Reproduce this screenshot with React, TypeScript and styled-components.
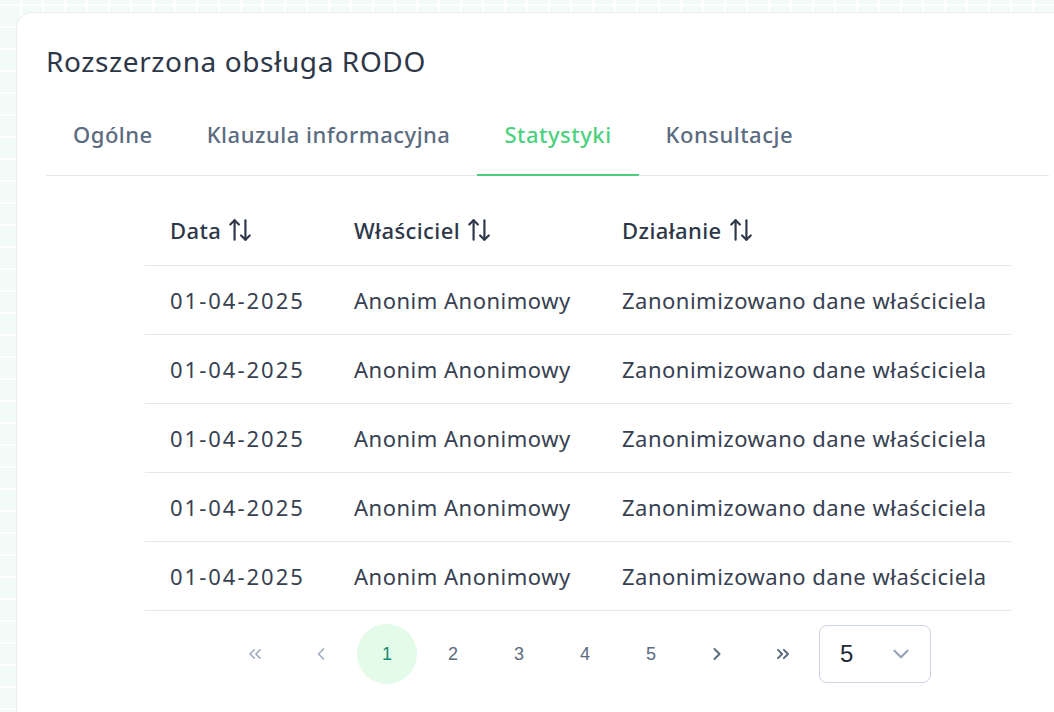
import React from "react";
import styled, { createGlobalStyle } from "styled-components";
import {
  ChevronDown,
  ChevronLeft,
  ChevronRight,
  ChevronsLeft,
  ChevronsRight,
} from "lucide-react";

const FONT = `"Noto Sans", "Open Sans", sans-serif`;

const GlobalStyle = createGlobalStyle`
  html, body {
    margin: 0;
    padding: 0;
    overflow: hidden;
  }
  body {
    font-family: ${FONT};
    background-color: #f2fbf8;
    background-image:
      repeating-linear-gradient(90deg, transparent 0 20px, #ffffff 20px 22px),
      repeating-linear-gradient(0deg, transparent 0 20px, #ffffff 20px 22px);
  }
`;

const tabs = ["Ogólne", "Klauzula informacyjna", "Statystyki", "Konsultacje"];

const columns = ["Data", "Właściciel", "Działanie"];

const rows = Array.from({ length: 5 }, () => ({
  date: "01-04-2025",
  owner: "Anonim Anonimowy",
  action: "Zanonimizowano dane właściciela",
}));

// up arrow on the left, down arrow on the right
const SortIcon = () => (
  <svg width="26" height="26" viewBox="0 0 24 24" fill="none" stroke="currentColor"
    strokeWidth="2" strokeLinecap="round" strokeLinejoin="round">
    <path d="M7 21V3" />
    <path d="M3 7l4-4 4 4" />
    <path d="M17 3v18" />
    <path d="M13 17l4 4 4-4" />
  </svg>
);

export default function App() {
  const active = 2;
  const page = 1;
  return (
    <>
      <GlobalStyle />
      <Page>
        <Card>
          <Title>Rozszerzona obsługa RODO</Title>
          <TabBar>
            {tabs.map((t, i) => (
              <Tab key={t} active={i === active}>
                {t}
              </Tab>
            ))}
          </TabBar>
          <TableWrap>
            <Table>
              <thead>
                <tr>
                  {columns.map((c) => (
                    <HeadCell key={c}>
                      <HeadInner>
                        {c}
                        <SortIcon />
                      </HeadInner>
                    </HeadCell>
                  ))}
                </tr>
              </thead>
              <tbody>
                {rows.map((r, i) => (
                  <tr key={i}>
                    <Cell wide>{r.date}</Cell>
                    <Cell>{r.owner}</Cell>
                    <Cell>{r.action}</Cell>
                  </tr>
                ))}
              </tbody>
            </Table>
            <Pager>
              <PageButton disabled>
                <ChevronsLeft size={20} strokeWidth={2} />
              </PageButton>
              <PageButton disabled>
                <ChevronLeft size={20} strokeWidth={2} />
              </PageButton>
              {[1, 2, 3, 4, 5].map((n) => (
                <PageButton key={n} current={n === page}>
                  {n}
                </PageButton>
              ))}
              <PageButton>
                <ChevronRight size={20} strokeWidth={2.4} />
              </PageButton>
              <PageButton>
                <ChevronsRight size={20} strokeWidth={2.4} />
              </PageButton>
              <Select>
                <span>5</span>
                <ChevronDown size={26} strokeWidth={2} color="#94a3b8" />
              </Select>
            </Pager>
          </TableWrap>
        </Card>
      </Page>
    </>
  );
}

const Page = styled.div`
  padding: 12px 0 0 16px;
`;

const Card = styled.div`
  width: 1064px;
  min-height: 740px;
  padding: 30px 30px 0 29px;
  background: #ffffff;
  border: 1px solid #e6efed;
  border-radius: 16px;
  box-sizing: border-box;
`;

const Title = styled.h1`
  margin: 0;
  font-size: 28px;
  font-weight: 400;
  letter-spacing: 0.6px;
  line-height: 36px;
  color: #2d3748;
`;

const TabBar = styled.div`
  display: flex;
  margin-top: 24px;
  border-bottom: 1px solid #e2e8f0;
`;

const Tab = styled.div<{ active?: boolean }>`
  padding: 16px 27px 25px 27px;
  font-size: 22px;
  font-weight: 500;
  letter-spacing: 0.5px;
  line-height: 30px;
  color: ${(p) => (p.active ? "#4cd07d" : "#5b6b80")};
  border-bottom: 2px solid ${(p) => (p.active ? "#4cd07d" : "transparent")};
  margin-bottom: -1px;
`;

const TableWrap = styled.div`
  width: 866px;
  margin: 23px 0 0 99px;
`;

const Table = styled.table`
  width: 100%;
  border-collapse: collapse;
`;

const HeadCell = styled.th`
  text-align: left;
  padding: 16px 24px 20px 25px;
  font-size: 22px;
  font-weight: 500;
  letter-spacing: 0.4px;
  color: #2d3748;
  border-bottom: 1px solid #e5e7eb;
  &:nth-child(1) {
    width: 135px;
  }
  &:nth-child(2) {
    width: 219px;
  }
`;

const HeadInner = styled.span`
  display: inline-flex;
  align-items: center;
  gap: 6px;
  line-height: 30px;
`;

const Cell = styled.td<{ wide?: boolean }>`
  padding: 0 24px 0 25px;
  height: 68px;
  font-size: 22px;
  letter-spacing: ${(p) => (p.wide ? "2px" : "0.5px")};
  color: #374151;
  border-bottom: 1px solid #e5e7eb;
  white-space: nowrap;
`;

const Pager = styled.div`
  display: flex;
  justify-content: center;
  align-items: center;
  gap: 6px;
  padding-top: 13px;
`;

const PageButton = styled.button<{ current?: boolean }>`
  width: 60px;
  height: 60px;
  border: none;
  border-radius: 50%;
  display: flex;
  align-items: center;
  justify-content: center;
  padding: 0;
  font-family: "Liberation Sans", Arial, sans-serif;
  font-size: 18px;
  background: ${(p) => (p.current ? "#e4fbe9" : "transparent")};
  color: ${(p) => (p.current ? "#1d8a73" : "#5b6b80")};
  &:disabled {
    color: #a0aec0;
  }
`;

const Select = styled.div`
  width: 112px;
  height: 58px;
  box-sizing: border-box;
  border: 1px solid #cbd5e1;
  border-radius: 8px;
  display: flex;
  align-items: center;
  justify-content: space-between;
  padding: 0 16px 0 20px;
  font-family: "Liberation Sans", Arial, sans-serif;
  font-size: 24px;
  color: #1f2937;
`;
